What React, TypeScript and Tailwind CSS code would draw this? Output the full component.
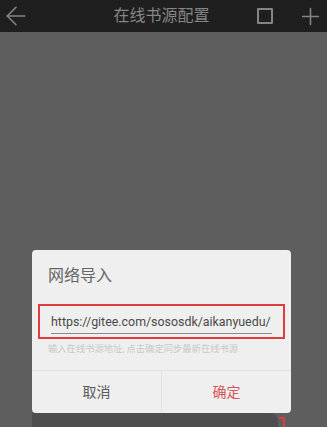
import { ArrowLeft, Plus } from 'lucide-react'

const cjk = { fontFamily: 'Roboto, "Noto Sans CJK SC", sans-serif' }

export default function App() {
  return (
    <div className="w-[327px] h-[427px] overflow-hidden bg-[#5e5e5e] flex flex-col" style={cjk}>
      {/* toolbar */}
      <div className="h-[32px] shrink-0 bg-[#1f1f1f] flex items-center pl-[1px] pr-[3px] text-[#858585]">
        <ArrowLeft size={30} strokeWidth={1.3} />
        <div className="flex-1 text-center text-[16px] leading-none pl-[35px]">在线书源配置</div>
        <div className="w-[16px] h-[16px] border-[2px] border-[#858585] rounded-[1px] mr-[24px]" />
        <Plus size={27} strokeWidth={1.4} />
      </div>

      {/* dialog */}
      <div className="pt-[218px] pl-[32px]">
        <div className="w-[259px] bg-[#efefef] rounded-[4px]">
          <div className="pt-[17px] pl-[16px] text-[16px] leading-[18px] text-[#656565]">网络导入</div>
          <div className="mt-[19px] mx-[6px] h-[35px] border-[2px] border-[#e23b3b] px-[11px] pt-[8px]">
            <div className="text-[12.4px] leading-[16px] text-[#4a4a4a] whitespace-nowrap border-b border-[#8a8a8a] pb-[3px]">
              https://gitee.com/sososdk/aikanyuedu/
            </div>
          </div>
          <div className="pl-[16px] pt-[3px] text-[9.3px] leading-[14px] text-[#c9c9c9] whitespace-nowrap">
            输入在线书源地址, 点击确定同步最新在线书源
          </div>
          <div className="mt-[14px] border-t border-[#e2e2e2] flex h-[43px]">
            <div className="w-[129px] flex items-center justify-center text-[14px] text-[#5c5c5c]">取消</div>
            <div className="flex-1 border-l border-[#e2e2e2] flex items-center justify-center text-[14px] text-[#d85656]">确定</div>
          </div>
        </div>
        <div className="flex items-start">
          <div className="w-[246px] h-[14px] bg-[#4e4e4e] rounded-tr-[8px]" />
          <div className="ml-[1px] mt-[4px] w-[6px] h-[10px] border-t-[2px] border-r-[2px] border-[#e23b3b]" />
        </div>
      </div>
    </div>
  )
}
